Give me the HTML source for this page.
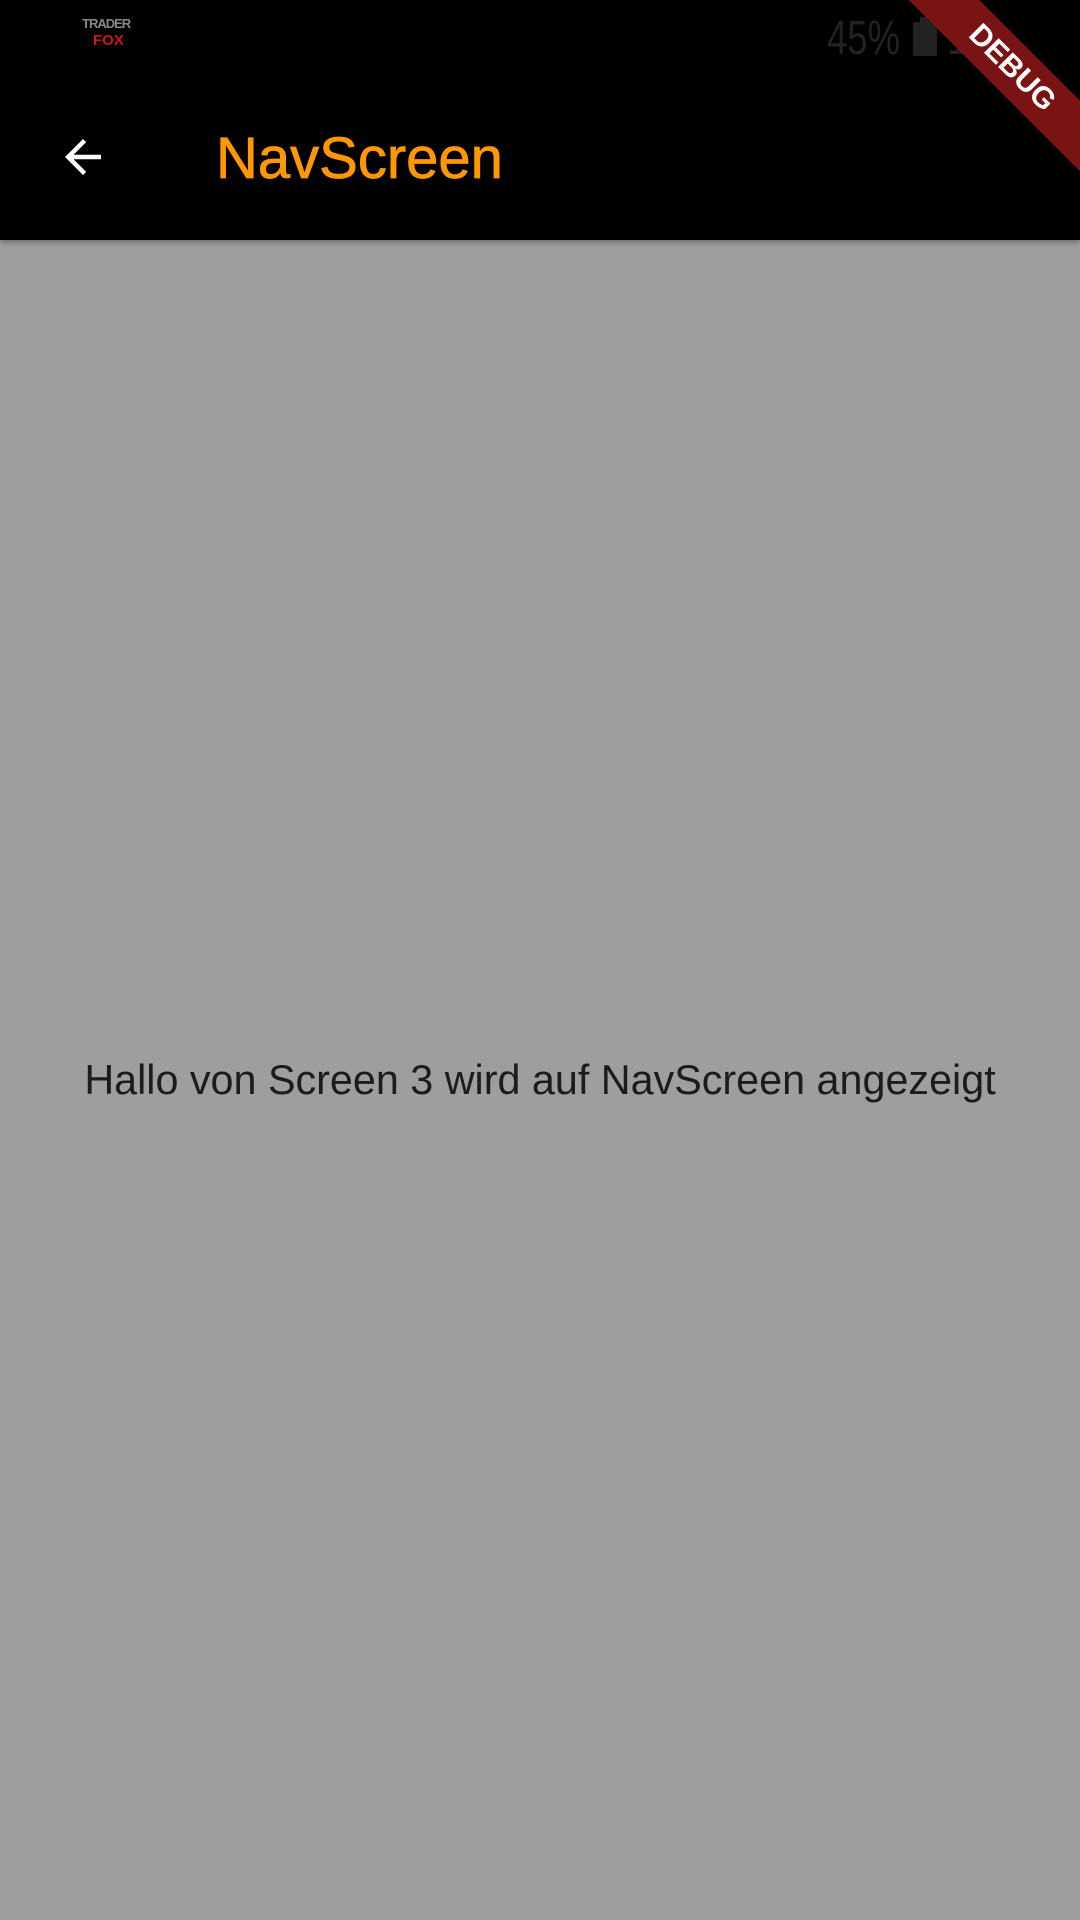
<!DOCTYPE html>
<html><head><meta charset="utf-8"><style>
html,body{margin:0;padding:0;width:1080px;height:1920px;overflow:hidden;background:#9e9e9e;font-family:"Liberation Sans",sans-serif}
.bar{position:absolute;left:0;top:0;width:1080px;height:240px;background:#000;box-shadow:0 2px 6px rgba(0,0,0,.35);overflow:hidden}
.title{position:absolute;left:216px;top:124px;font-size:58px;color:#ff9800;line-height:70px;-webkit-text-stroke:0.8px #ff9800}
.msg{position:absolute;left:0;width:1080px;top:1052px;text-align:center;font-size:41.3px;color:#1c1c1c;line-height:56px}
.st{position:absolute;top:14px;font-size:48px;color:#222;line-height:50px;transform:scaleX(0.76);transform-origin:0 0}
.banner{position:absolute;width:320px;height:50px;background:#7a1414;color:#fff;font-weight:bold;font-size:30px;text-align:center;line-height:50px;transform:rotate(45deg);left:852px;top:43px}
</style></head><body>
<div class="bar">
 <div style="position:absolute;left:82px;top:16px;font-size:13px;color:#888;font-weight:bold;letter-spacing:-1px">TRADER</div>
 <div style="position:absolute;left:93px;top:32px;font-size:15px;color:#d0141c;font-weight:bold">FOX</div>
 <div class="st" style="left:827px">45%</div>
 <div style="position:absolute;left:913px;top:22px;width:24px;height:34px;background:#222;border-radius:2px"></div>
 <div style="position:absolute;left:920px;top:17px;width:10px;height:6px;background:#222"></div>
 <div class="st" style="left:947px">19</div>
 <svg style="position:absolute;left:56px;top:130px" width="54" height="54" viewBox="0 0 24 24"><path d="M20 11H7.83l5.59-5.59L12 4l-8 8 8 8 1.41-1.41L7.83 13H20v-2z" fill="#fff"/></svg>
 <div class="title">NavScreen</div>
 <div class="banner">DEBUG</div>
</div>
<div class="msg">Hallo von Screen 3 wird auf NavScreen angezeigt</div>
</body></html>
